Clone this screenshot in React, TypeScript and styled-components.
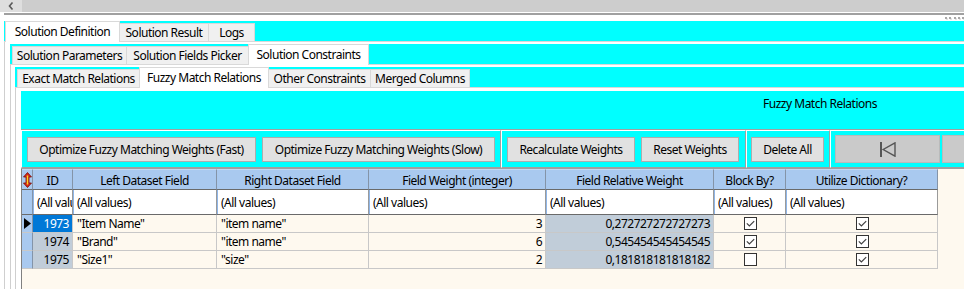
import React from 'react';
import styled, { createGlobalStyle } from 'styled-components';

// the form is wider than the captured window, only its left part is visible
const FORM_WIDTH = 1640;
const CYAN = '#00ffff';
const HEADER_BLUE = '#a9c9ef';
const CREAM = '#fef9ef';

type TabSpec = { label: string; width: number };

const OUTER_TABS: TabSpec[] = [
  { label: 'Solution Definition', width: 115 },
  { label: 'Solution Result', width: 90 },
  { label: 'Logs', width: 47 },
];
const DEFINITION_TABS: TabSpec[] = [
  { label: 'Solution Parameters', width: 115 },
  { label: 'Solution Fields Picker', width: 123 },
  { label: 'Solution Constraints', width: 121 },
];
const CONSTRAINT_TABS: TabSpec[] = [
  { label: 'Exact Match Relations', width: 123 },
  { label: 'Fuzzy Match Relations', width: 130 },
  { label: 'Other Constraints', width: 103 },
  { label: 'Merged Columns', width: 100 },
];

const COLUMNS = [
  'ID',
  'Left Dataset Field',
  'Right Dataset Field',
  'Field Weight (integer)',
  'Field Relative Weight',
  'Block By?',
  'Utilize Dictionary?',
];

const ROWS = [
  { id: 1973, left: '"Item Name"', right: '"item name"', weight: 3, rel: '0,272727272727273', block: true, dict: true },
  { id: 1974, left: '"Brand"', right: '"item name"', weight: 6, rel: '0,545454545454545', block: true, dict: true },
  { id: 1975, left: '"Size1"', right: '"size"', weight: 2, rel: '0,181818181818182', block: false, dict: true },
];

const App = () => {
  const currentRow = 0;

  return (
    <>
      <GlobalStyle />
      <Form>
        <ScrollBar>
          <ScrollButton>
            <svg width="6" height="8" viewBox="0 0 6 8">
              <polyline points="4.5,0.5 1.5,4 4.5,7.5" fill="none" stroke="#5a5a5a" strokeWidth="1.6" />
            </svg>
          </ScrollButton>
        </ScrollBar>
        <Splitter />
        <GripRow>
          {[...Array(8)].map((_d, i) => (
            <GripDot key={`grip-${i}`} />
          ))}
        </GripRow>

        <Workspace>
          <TabControl tabs={OUTER_TABS} active={0} inset={1} pad={5} top={2}>
            <TabControl tabs={DEFINITION_TABS} active={2} inset={2} pad={4} top={2}>
              <TabControl tabs={CONSTRAINT_TABS} active={1} inset={2} pad={5} top={3}>
                <RelationsPanel>
                  <TitleBar>Fuzzy Match Relations</TitleBar>

                  <Toolbar>
                    <ToolSection $w={480} $padLeft={5}>
                      <ActionButton $w={229}>Optimize Fuzzy Matching Weights (Fast)</ActionButton>
                      <ActionButton $w={233}>Optimize Fuzzy Matching Weights (Slow)</ActionButton>
                    </ToolSection>
                    <ToolSection $w={245} $padLeft={5}>
                      <ActionButton $w={128}>Recalculate Weights</ActionButton>
                      <ActionButton $w={98}>Reset Weights</ActionButton>
                    </ToolSection>
                    <ToolSection $w={84} $padLeft={4}>
                      <ActionButton $w={73}>Delete All</ActionButton>
                    </ToolSection>
                    <ToolSection $padLeft={4} $gap={2}>
                      <NavButton aria-label="First">
                        <svg width="16" height="15" viewBox="0 0 16 15">
                          <rect x="0" y="0" width="2" height="15" fill="#555" />
                          <polygon points="15,0.8 3.2,7.5 15,14.2" fill="none" stroke="#555" strokeWidth="1.4" />
                        </svg>
                      </NavButton>
                      <NavButton aria-label="Previous" />
                      <NavButton aria-label="Next" />
                      <NavButton aria-label="Last" />
                    </ToolSection>
                  </Toolbar>

                  <GridArea>
                    <GridTable>
                      <HeaderRow>
                        <SelectorHeader>
                          <svg width="9" height="16" viewBox="0 0 9 16">
                            <polygon
                              points="4.5,0.5 8.5,5 6,5 6,11 8.5,11 4.5,15.5 0.5,11 3,11 3,5 0.5,5"
                              fill="#d3281c"
                              stroke="#7a0a05"
                              strokeWidth="0.8"
                            />
                            <rect x="3.8" y="3.5" width="1.4" height="9" fill="#ffd21f" />
                          </svg>
                        </SelectorHeader>
                        {COLUMNS.map(col => (
                          <HeaderCell key={col}>{col}</HeaderCell>
                        ))}
                      </HeaderRow>

                      <FilterRow>
                        <SelectorFilter />
                        {COLUMNS.map(col => (
                          <FilterCell key={`filter-${col}`}>
                            <FilterText>(All values)</FilterText>
                          </FilterCell>
                        ))}
                      </FilterRow>

                      {ROWS.map((row, i) => (
                        <DataRow key={row.id}>
                          <SelectorCell>
                            {i === currentRow ? (
                              <svg width="7" height="11" viewBox="0 0 7 11">
                                <polygon points="0,0 7,5.5 0,11" fill="#000" />
                              </svg>
                            ) : null}
                          </SelectorCell>
                          <Cell $tone={i === currentRow ? 'current' : 'key'} $align="right">
                            {row.id}
                          </Cell>
                          <Cell>{row.left}</Cell>
                          <Cell>{row.right}</Cell>
                          <Cell $align="right">{row.weight}</Cell>
                          <Cell $tone="key" $align="right">
                            {row.rel}
                          </Cell>
                          <Cell $align="center">
                            <CheckBox checked={row.block} />
                          </Cell>
                          <Cell $align="center">
                            <CheckBox checked={row.dict} />
                          </Cell>
                        </DataRow>
                      ))}
                    </GridTable>
                  </GridArea>
                </RelationsPanel>
              </TabControl>
            </TabControl>
          </TabControl>
        </Workspace>
      </Form>
    </>
  );
};

type TabControlProps = {
  tabs: TabSpec[];
  active: number;
  inset: number;
  pad: number;
  top: number;
  children?: React.ReactNode;
};

const TabControl = ({ tabs, active, inset, pad, top, children }: TabControlProps) => (
  <TabBox>
    <TabStrip $inset={inset}>
      {tabs.map((tab, i) => (
        <Tab key={tab.label} $active={i === active} $w={tab.width}>
          {tab.label}
        </Tab>
      ))}
    </TabStrip>
    <TabPage $pad={pad} $top={top}>
      {children}
    </TabPage>
  </TabBox>
);

const CheckBox = ({ checked }: { checked: boolean }) => (
  <svg width="13" height="13" viewBox="0 0 13 13">
    <rect x="0.5" y="0.5" width="12" height="12" fill="#fff" stroke="#333" />
    {checked ? (
      <polyline points="2.8,6.4 5.4,9 10.2,4.2" fill="none" stroke="#404040" strokeWidth="1.2" />
    ) : null}
  </svg>
);

const GlobalStyle = createGlobalStyle`
  html, body {
    margin: 0;
    padding: 0;
    background: #ffffff;
    overflow: hidden;
  }
  body {
    font-family: "Noto Sans", "Open Sans", sans-serif;
    font-size: 12px;
    letter-spacing: -0.5px;
    color: #000;
  }
  * {
    box-sizing: border-box;
  }
`;

const Form = styled.div`
  width: ${FORM_WIDTH}px;
  height: 360px;
  display: flex;
  flex-direction: column;
  background: #fff;
`;

const ScrollBar = styled.div`
  height: 12px;
  flex-shrink: 0;
  display: flex;
  background: #cdcdcd;
`;

const ScrollButton = styled.div`
  width: 22px;
  display: flex;
  align-items: center;
  justify-content: center;
  background: #dedede;
`;

const Splitter = styled.div`
  height: 3px;
  flex-shrink: 0;
  margin-left: 4px;
  border-top: 1px solid #fff;
  border-bottom: 2px solid #a0a0a0;
`;

const GripRow = styled.div`
  height: 6px;
  flex-shrink: 0;
  display: flex;
  align-items: center;
  gap: 2.35px;
  padding-left: 945px;
`;

const GripDot = styled.span`
  width: 2px;
  height: 2px;
  background: #a8a8a8;
  box-shadow: 1px 1px 0 #e4e4e4;
`;

const Workspace = styled.div`
  flex: 1;
  display: flex;
  flex-direction: column;
  padding: 0 4px;
  min-height: 0;
`;

const TabBox = styled.div`
  flex: 1;
  display: flex;
  flex-direction: column;
  min-height: 0;
`;

const TabStrip = styled.div<{ $inset: number }>`
  height: 20px;
  flex-shrink: 0;
  display: flex;
  align-items: flex-end;
  padding-left: ${p => p.$inset}px;
  background: ${CYAN};
`;

const Tab = styled.div<{ $active: boolean; $w: number }>`
  position: relative;
  z-index: ${p => (p.$active ? 2 : 1)};
  width: ${p => p.$w}px;
  height: ${p => (p.$active ? 21 : 18)}px;
  margin-bottom: ${p => (p.$active ? -1 : 0)}px;
  margin-right: -1px;
  display: flex;
  align-items: center;
  justify-content: center;
  padding-bottom: ${p => (p.$active ? 1 : 0)}px;
  background: ${p => (p.$active ? '#ffffff' : '#f0f0f0')};
  border: 1px solid #d9d9d9;
  border-bottom: none;
  white-space: nowrap;
`;

const TabPage = styled.div<{ $pad: number; $top: number }>`
  flex: 1;
  display: flex;
  flex-direction: column;
  min-height: 0;
  padding: ${p => p.$top}px ${p => p.$pad}px 0;
  background: #fff;
  border-top: 1px solid #d9d9d9;
  border-left: 1px solid #cfcfcf;
  border-right: 1px solid #cfcfcf;
`;

const RelationsPanel = styled.div`
  flex: 1;
  display: flex;
  flex-direction: column;
  min-height: 0;
`;

const TitleBar = styled.div`
  height: 38px;
  flex-shrink: 0;
  display: flex;
  justify-content: center;
  padding-top: 4px;
  background: ${CYAN};
`;

const Toolbar = styled.div`
  display: flex;
  flex-shrink: 0;
  border-top: 1px solid #a0a0a0;
  border-bottom: 1px solid #a0a0a0;
`;

const ToolSection = styled.div<{ $w?: number; $padLeft: number; $gap?: number }>`
  ${p => (p.$w ? `width: ${p.$w}px;` : 'flex: 1;')}
  height: 38px;
  display: flex;
  align-items: center;
  gap: ${p => p.$gap ?? 6}px;
  padding-left: ${p => p.$padLeft}px;
  background: ${CYAN};
  border-top: 1px solid #fff;
  border-left: 1px solid #fff;
  border-right: 1px solid #a0a0a0;
  border-bottom: 1px solid #a0a0a0;
`;

const ActionButton = styled.button<{ $w: number }>`
  width: ${p => p.$w}px;
  height: 25px;
  flex-shrink: 0;
  padding: 0;
  font: inherit;
  letter-spacing: inherit;
  color: #000;
  background: #e1e1e1;
  border: 1px solid #adadad;
  white-space: nowrap;
`;

const NavButton = styled.button`
  width: 105px;
  height: 28px;
  flex-shrink: 0;
  padding: 0;
  display: flex;
  align-items: center;
  justify-content: center;
  background: #cacaca;
  border: 1px solid #bababa;
`;

const GridArea = styled.div`
  flex: 1;
  display: flex;
  align-items: flex-start;
  background: ${CREAM};
  border-left: 1px solid #808080;
`;

const GridTable = styled.div`
  display: flex;
  flex-direction: column;
`;

const COLS = '11px 40px 144px 152px 177px 168px 72px 152px';

const HeaderRow = styled.div`
  display: grid;
  grid-template-columns: ${COLS};
  height: 21px;
`;

const HeaderCell = styled.div`
  display: flex;
  align-items: center;
  justify-content: center;
  padding-top: 1px;
  background: ${HEADER_BLUE};
  border-top: 1px solid #c4d8f2;
  border-right: 1px solid #8494a8;
  border-bottom: 1px solid #6a6a6a;
  white-space: nowrap;
  overflow: hidden;
`;

const SelectorHeader = styled(HeaderCell)`
  padding-top: 0;
`;

const FilterRow = styled.div`
  display: grid;
  grid-template-columns: ${COLS};
  height: 25px;
`;

const FilterCell = styled.div`
  display: flex;
  align-items: center;
  padding-left: 4px;
  min-width: 0;
  background: #fff;
  border-right: 1px solid #9a9a9a;
  border-bottom: 1px solid #6a6a6a;
  box-shadow: inset 1px 0 0 #8fb6e8;
  overflow: hidden;
`;

const FilterText = styled.span`
  display: block;
  flex: 1;
  min-width: 0;
  white-space: nowrap;
  overflow: hidden;
  text-overflow: clip;
`;

const SelectorFilter = styled.div`
  background: ${HEADER_BLUE};
  border-right: 1px solid #8494a8;
  border-bottom: 1px solid #6a6a6a;
`;

const DataRow = styled.div`
  display: grid;
  grid-template-columns: ${COLS};
  height: 18px;
`;

const SelectorCell = styled.div`
  display: flex;
  align-items: center;
  padding-left: 2px;
  background: ${HEADER_BLUE};
  border-right: 1px solid #8494a8;
  border-bottom: 1px solid #c8c8c8;
`;

const Cell = styled.div<{ $tone?: 'plain' | 'key' | 'current'; $align?: 'left' | 'right' | 'center' }>`
  display: flex;
  align-items: center;
  justify-content: ${p => (p.$align === 'right' ? 'flex-end' : p.$align === 'center' ? 'center' : 'flex-start')};
  padding: 0 3px 0 4px;
  background: ${p => (p.$tone === 'current' ? '#0078d7' : p.$tone === 'key' ? '#c1cdd9' : 'transparent')};
  color: ${p => (p.$tone === 'current' ? '#fff' : '#000')};
  border-right: 1px solid #c8c8c8;
  border-bottom: 1px solid #c8c8c8;
  white-space: nowrap;
  overflow: hidden;
`;

export default App;
